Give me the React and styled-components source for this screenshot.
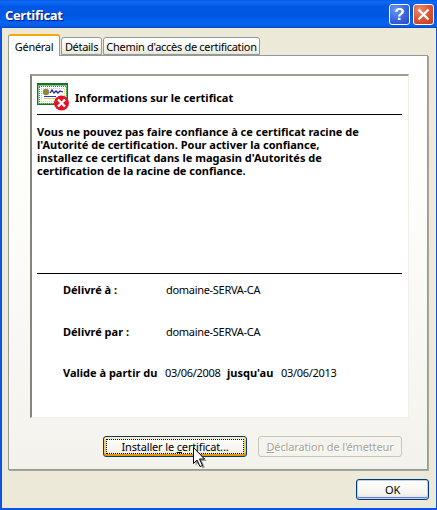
import React from 'react';
import styled, { createGlobalStyle } from 'styled-components';

const GlobalStyle = createGlobalStyle`
  html, body { margin: 0; padding: 0; background: #0831d9; }
  * { box-sizing: border-box; }
`;

const uiFont = `'Noto Sans', 'Open Sans', 'Liberation Sans', sans-serif`;

const Window = styled.div`
  position: relative;
  width: 437px;
  height: 510px;
  display: flex;
  flex-direction: column;
  font-family: ${uiFont};
  font-size: 11px;
  color: #000;
  overflow: hidden;
  background: #0a55e4;
`;

const TitleBar = styled.div`
  height: 28px;
  flex: none;
  display: flex;
  align-items: center;
  padding: 1px 3px 0 5px;
  background: linear-gradient(180deg, #0a5ae6 0%, #0d6bf5 8%, #0058e6 22%, #0057e0 55%, #0264f4 82%, #0a5cdf 94%, #0042c8 100%);
`;

const TitleText = styled.span`
  flex: 1;
  color: #fff;
  font-family: 'Open Sans', 'Liberation Sans', sans-serif;
  font-weight: 700;
  font-size: 13px;
  letter-spacing: -0.3px;
  text-shadow: 1px 1px 1px #0f1089;
`;

const CaptionButton = styled.div`
  width: 21px;
  height: 21px;
  margin-left: 3px;
  border: 1px solid #fff;
  border-radius: 3px;
  display: flex;
  align-items: center;
  justify-content: center;
  background: ${(p) => (p.$close
    ? 'radial-gradient(circle at 30% 25%, #ee8a6c 0%, #dd5631 50%, #c23a14 100%)'
    : 'radial-gradient(circle at 30% 25%, #6f97f0 0%, #3a68e2 50%, #2446c4 100%)')};
`;

const HelpMark = styled.span`
  color: #fff;
  font-family: 'Liberation Sans', sans-serif;
  font-weight: 700;
  font-size: 17px;
  line-height: 1;
`;

const Client = styled.div`
  flex: 1;
  display: flex;
  flex-direction: column;
  margin: 0 1px 2px 2px;
  padding: 7px 7px 0 6px;
  background: #ece9d8;
`;

const TabRow = styled.div`
  display: flex;
  align-items: flex-end;
  height: 20px;
  flex: none;
  gap: 1px;
`;

const Tab = styled.div`
  position: relative;
  height: ${(p) => (p.$active ? '22px' : '18px')};
  margin-bottom: ${(p) => (p.$active ? '-1px' : '0')};
  width: ${(p) => p.$width}px;
  display: flex;
  align-items: center;
  justify-content: center;
  padding-top: 1px;
  white-space: nowrap;
  letter-spacing: -0.3px;
  background: ${(p) => (p.$active ? '#fff' : 'linear-gradient(180deg, #fff 0%, #f5f4ec 70%, #e8e5d6 100%)')};
  border: 1px solid #919b9c;
  border-bottom: ${(p) => (p.$active ? 'none' : '1px solid #919b9c')};
  border-top: ${(p) => (p.$active ? '2px solid #f8a900' : '1px solid #919b9c')};
  border-radius: 3px 3px 0 0;
  z-index: ${(p) => (p.$active ? 1 : 0)};
`;

const TabPanel = styled.div`
  height: 415px;
  flex: none;
  display: flex;
  flex-direction: column;
  width: 420px;
  padding: 18px 18px 0 21px;
  border: 1px solid #919b9c;
  box-shadow: 1px 1px 0 #aca899;
  background: linear-gradient(180deg, #fff 0%, #fdfdfb 35%, #f4f2ec 100%);
`;

const Sheet = styled.div`
  height: 344px;
  flex: none;
  display: flex;
  flex-direction: column;
  padding: 6px 6px 0 5px;
  background: #fff;
  border-style: solid;
  border-width: 2px 1px 1px 2px;
  border-color: #a09e92 #f1efe8 #f1efe8 #86857a;
`;

const Heading = styled.div`
  display: flex;
  align-items: center;
  height: 33px;
  flex: none;
  gap: 6px;
  border-bottom: 1px solid #000;
  padding-bottom: 3px;
`;

const HeadingText = styled.span`
  font-weight: 700;
  margin-top: 2px;
`;

const Message = styled.p`
  flex: 1;
  margin: 0;
  padding-top: 10px;
  font-weight: 700;
  line-height: 13px;
`;

const DetailBlock = styled.div`
  flex: none;
  height: 144px;
  border-top: 1px solid #000;
  padding: 8px 0 0 26px;
  display: flex;
  flex-direction: column;
  gap: 26.5px;
`;

const DetailRow = styled.div`
  display: flex;
  align-items: center;
  height: 15px;
  white-space: nowrap;
`;

const Label = styled.span`
  font-weight: 700;
  width: ${(p) => p.$width || 103}px;
  flex: none;
`;

const Value = styled.span`
  width: ${(p) => (p.$width ? `${p.$width}px` : 'auto')};
  flex: none;
  letter-spacing: -0.3px;
`;

const PanelActions = styled.div`
  display: flex;
  margin-top: 18px;
  margin-left: 73px;
  gap: 11px;
`;

const Button = styled.button`
  width: ${(p) => p.$width}px;
  height: 21px;
  padding: 0;
  font-family: ${uiFont};
  font-size: 11px;
  letter-spacing: -0.15px;
  color: #000;
  border: 1px solid #003c74;
  border-radius: 3px;
  background: linear-gradient(180deg, #fff 0%, #f5f4ee 70%, #e6e3d6 100%);
  box-shadow: inset 0 0 0 1px #bdd0f0, inset 0 -1px 0 1px #6982ee;
  &:disabled {
    color: #a8a694;
    border-color: #c9c7ba;
    background: #f4f3ee;
    box-shadow: none;
    text-shadow: 1px 1px 0 #fff;
  }
`;

const FocusButton = styled(Button)`
  box-shadow: inset 0 2px 0 #ffe9b8, inset 0 -2px 0 #e59700, inset 2px 0 0 #fbc761, inset -2px 0 0 #fbc761;
  outline: 1px dotted #000;
  outline-offset: -4px;
`;

const Footer = styled.div`
  flex: 1;
  display: flex;
  justify-content: flex-end;
  padding: 9px 0 0 0;
`;

const Pointer = styled.svg`
  position: absolute;
  left: 193px;
  top: 447px;
`;

const CertIcon = () => (
  <svg width="32" height="28" viewBox="0 0 32 28" shapeRendering="crispEdges" style={{ flex: 'none' }}>
    <rect x="0" y="0" width="31" height="22" fill="#17702b" />
    <rect x="1" y="2" width="29" height="19" fill="#7fc98a" />
    <rect x="2" y="3" width="27" height="17" fill="#fff" stroke="#2f9a48" strokeDasharray="1 1" />
    <rect x="4" y="5" width="23" height="13" fill="#fff" stroke="#e8dc30" strokeDasharray="1 1" />
    <circle cx="9" cy="9" r="3.200" fill="#8c8a38" shapeRendering="auto" />
    <path d="M13 10l2-3 2 3 2-2 2 2 2-2 3 1" fill="none" stroke="#1428b0" strokeWidth="1.300" shapeRendering="auto" />
    <rect x="7" y="13" width="12" height="1" fill="#2038c8" />
    <rect x="7" y="15" width="12" height="1" fill="#e0d030" />
    <g shapeRendering="auto">
      <circle cx="24.500" cy="20" r="7.500" fill="#e5132a" />
      <path d="M21 16.500l7 7M28 16.500l-7 7" stroke="#fff" strokeWidth="2.400" />
    </g>
  </svg>
);

export default function App() {
  return (
    <Window>
      <GlobalStyle />
      <TitleBar>
        <TitleText>Certificat</TitleText>
        <CaptionButton><HelpMark>?</HelpMark></CaptionButton>
        <CaptionButton $close>
          <svg width="13" height="13" viewBox="0 0 13 13">
            <path d="M1.500 1.500l10 10M11.500 1.500l-10 10" stroke="#fff" strokeWidth="2.400" />
          </svg>
        </CaptionButton>
      </TitleBar>
      <Client>
        <TabRow>
          <Tab $active $width={52}>Général</Tab>
          <Tab $width={41}>Détails</Tab>
          <Tab $width={157}>Chemin d'accès de certification</Tab>
        </TabRow>
        <TabPanel>
          <Sheet>
            <Heading>
              <CertIcon />
              <HeadingText>Informations sur le certificat</HeadingText>
            </Heading>
            <Message>
              Vous ne pouvez pas faire confiance à ce certificat racine de<br />
              l'Autorité de certification. Pour activer la confiance,<br />
              installez ce certificat dans le magasin d'Autorités de<br />
              certification de la racine de confiance.
            </Message>
            <DetailBlock>
              <DetailRow><Label>Délivré à :</Label><Value>domaine-SERVA-CA</Value></DetailRow>
              <DetailRow><Label>Délivré par :</Label><Value>domaine-SERVA-CA</Value></DetailRow>
              <DetailRow>
                <Label $width={102}>Valide à partir du</Label>
                <Value $width={62}>03/06/2008</Value>
                <Label $width={54}>jusqu'au</Label>
                <Value>03/06/2013</Value>
              </DetailRow>
            </DetailBlock>
          </Sheet>
          <PanelActions>
            <FocusButton $width={144}>Installer le <u>c</u>ertificat...</FocusButton>
            <Button $width={144} disabled><u>D</u>éclaration de l'émetteur</Button>
          </PanelActions>
        </TabPanel>
        <Footer>
          <Button $width={73}>OK</Button>
        </Footer>
      </Client>
      <Pointer width="16" height="24" viewBox="0 0 16 24">
        <path d="M2.500 2.500v16l4-3.500 3 6.500 2.500-1-3-6.500h5z" fill="#000" opacity="0.35" />
        <path d="M.5.5v16l3.500-3.500 3 6.500 2.500-1-3-6.500h5z" fill="#fff" stroke="#000" strokeWidth="1" />
      </Pointer>
    </Window>
  );
}
